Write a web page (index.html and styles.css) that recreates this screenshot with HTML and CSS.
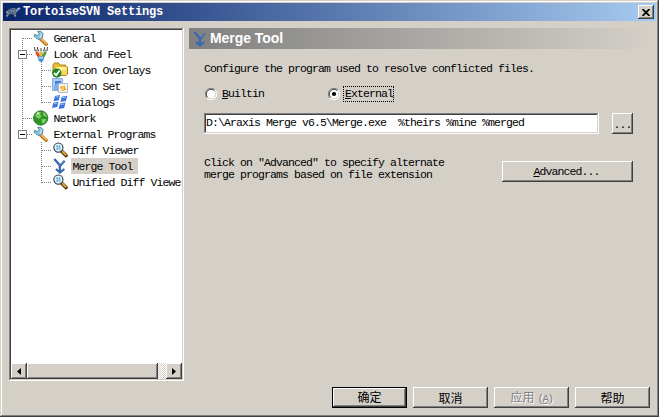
FILE: index.html
```html
<!DOCTYPE html>
<html lang="en">
<head>
<meta charset="utf-8">
<title>TortoiseSVN Settings</title>
<link rel="stylesheet" href="styles.css">
</head>
<body>
<svg class="sprite" width="0" height="0">
  <symbol id="wrench" viewBox="0 0 16 16">
    <path d="M7 8.5 13.2 14.2" stroke="#b87318" stroke-width="3.4" stroke-linecap="round"/>
    <path d="M7.4 8.1 13.4 13.4" stroke="#f0b45c" stroke-width="2" stroke-linecap="round"/>
    <path d="M4.6 1.5 7.8 1.2 10 3.5 9.6 7.2 7.5 9.5 4.4 8.9 1.4 6.6 1.5 4.4 4.6 5.5 6.3 3.8Z" fill="#8cc4d8" stroke="#447f9b" stroke-width=".9"/>
    <path d="M8 3.2 8.2 6.3 6.6 7.7" stroke="#d2edf5" fill="none"/>
  </symbol>
  <symbol id="look" viewBox="0 0 16 16">
    <path d="M2 4 4.5 11H11.5L14 4 11 7 8 4 5 7Z" fill="#d8d4cc"/>
    <path d="M3.4 6 6 10.5" stroke="#e84b20" stroke-width="2.8"/>
    <path d="M8 6V11" stroke="#f5b72d" stroke-width="2.6"/>
    <path d="M12.6 6 10 10.5" stroke="#49a43c" stroke-width="2.8"/>
    <path d="M1.5 1 2 4.5 4 5M4.5 1V3.5L6 5M8 2V5M11.5 1V3.5L10 5M14.5 1 14 4.5 12 5" stroke="#555" stroke-width="1.1" fill="none"/>
    <path d="M4.8 10.5H11.2L10.2 15 8 16 5.8 15Z" fill="#4388df"/>
    <path d="M6 12H10" stroke="#b9dcff" stroke-width="1.6"/>
  </symbol>
  <symbol id="overlay" viewBox="0 0 16 16">
    <path d="M1 12V2.5L2.5 1H6.5L8 3H13.5V5H15.5V12L14 13.5H2Z" fill="#e8bc35" stroke="#a57712" stroke-width=".9"/>
    <path d="M4 5H14.5V12.5H4Z" fill="#fff09a"/>
    <path d="M5 8H14V12H5Z" fill="#f7d85c"/>
    <circle cx="4.8" cy="11.1" r="4.6" fill="#168522"/>
    <path d="M2 11 4.2 13.2 7.6 8.5" stroke="#fff" stroke-width="1.8" fill="none"/>
  </symbol>
  <symbol id="iconset" viewBox="0 0 16 16">
    <path d="M.5 .5H10.5V12.5H.5Z" fill="#a9cbf4" stroke="#8aaada"/>
    <path d="M3 3H9V8H3Z" fill="#447fd6"/><path d="M2 8 5 5 8 9V12H2Z" fill="#7eabed"/>
    <path d="M6.5 5.5H15.5V14.5H6.5Z" fill="#f9f4e8" stroke="#b1b7c8"/>
    <path d="M9 8 10.8 8.6 13 7.4 13.2 9.8 14.4 11.5 12 12.6 10 13.2 9.6 11 8 10Z" fill="#f39c2d"/>
    <path d="M10 9H12V12H10Z" fill="#ffcf5d"/>
  </symbol>
  <symbol id="dialogs" viewBox="0 0 16 16">
    <path d="M3 2 8 1 6.8 6.3 1.5 7.2Z M9.7 2.7 15.3 1.7 14 7 8.5 8Z M1.3 8.7 6.5 7.8 5.2 13 0 14Z M8 9.5 13.5 8.5 12.2 14 6.7 15Z" fill="#3e72df"/>
    <path d="M3.5 3.2 6.7 2.5M10.2 3.8 14 3.1M2 9.8 5 9.3M8.6 10.6 12 10" stroke="#9dc0ff"/>
  </symbol>
  <symbol id="globe" viewBox="0 0 16 16">
    <circle cx="7.7" cy="8" r="7.2" fill="#2d9426" stroke="#17681a" stroke-width=".7"/>
    <path d="M2 5 5 1.7 8 2 7 4.5 9 6 6 9 3 7Z M10 2 13 4 14 7 11 6 9.5 4Z M8.5 9 13.5 9 11.5 13 9 13Z" fill="#7dcb61"/>
    <path d="M4 3.6 6.2 2.8" stroke="#e3ffd5" stroke-width="1.4"/>
  </symbol>
  <symbol id="magnifier" viewBox="0 0 16 16">
    <path d="M10 9.5 14 13.5" stroke="#51320b" stroke-width="3.6" stroke-linecap="round"/>
    <path d="M10.5 9.5 13.7 12.8" stroke="#e8a52c" stroke-width="1.9" stroke-linecap="round"/>
    <circle cx="6.4" cy="5.6" r="4.6" fill="#d9f0ff" stroke="#343b44" stroke-width="1.1"/>
    <path d="M4 4.5H8.5M4 6.8H8.5M5.2 3V8M7.6 3V8" stroke="#71a9d3" stroke-width=".8"/>
  </symbol>
  <symbol id="merge" viewBox="0 0 16 16">
    <path d="M2.3 .9 7.8 7.2 8 14M12.7 2.7 8.2 7.8" fill="none" stroke="#3868ae" stroke-width="2.3"/>
    <path d="M4 11 8 14.5 12.3 11" fill="none" stroke="#3868ae" stroke-width="2.2"/>
    <path d="M9 6.4 12.2 3" stroke="#78a2bf" stroke-width=".8"/>
  </symbol>
  <symbol id="radio-ring" viewBox="0 0 12 12">
    <circle cx="6" cy="6" r="5" fill="#fff"/>
    <path d="M1.9 10.1A5.6 5.6 0 0 1 10.1 1.9" fill="none" stroke="#808080"/>
    <path d="M10.1 1.9A5.6 5.6 0 0 1 1.9 10.1" fill="none" stroke="#fff"/>
    <path d="M2.7 9.3A4.6 4.6 0 0 1 9.3 2.7" fill="none" stroke="#404040"/>
    <path d="M9.3 2.7A4.6 4.6 0 0 1 2.7 9.3" fill="none" stroke="#d4d0c8"/>
  </symbol>
</svg>

<main class="window">
  <header class="titlebar">
    <svg class="tortoise" viewBox="0 0 16 16">
      <path d="M1 9 3 6 7 4H10L12 7 11 10H5L3 12H1L2 10ZM10 9 11.5 12H9.5L8 10Z" fill="#6e7786"/>
      <path d="M4 7 6 5 9 5 10.5 8 8 9 5 9Z" fill="#3e5d82"/>
      <path d="M11 7 12 4 15 3.5 15.5 5 13 6.5 12 8Z" fill="#81a8ce"/>
      <path d="M1 8H3M6 6 7 8M9 6 8 8M1 12H3M9 12H11" stroke="#b1bac5" stroke-width=".9"/>
    </svg>
    <h1 class="caption">TortoiseSVN Settings</h1>
    <button class="raised close" aria-label="Close"><svg width="8" height="7" viewBox="0 0 8 7"><path d="M.5 0 7.5 7M7.5 0 .5 7" stroke="#000" stroke-width="1.7"/></svg></button>
  </header>

  <div class="content">
    <nav class="tree sunken">
      <ul class="nodes">
        <li class="node"><svg class="gutter"><path class="dots" d="M11.5 8V16M12 8.5H22"/></svg><svg class="icon"><use href="#wrench"/></svg><span class="label">General</span></li>
        <li class="node"><svg class="gutter"><path class="dots" d="M11.5 0V16M16 8.5H22"/><path class="expander" d="M7.5 4.5H15.5V12.5H7.5Z"/><path class="minus" d="M9 8.5H14"/></svg><svg class="icon"><use href="#look"/></svg><span class="label">Look and Feel</span></li>
        <li class="node child"><svg class="gutter"><path class="dots" d="M11.5 0V16M30.5 0V16M31 8.5H41"/></svg><svg class="icon"><use href="#overlay"/></svg><span class="label">Icon Overlays</span></li>
        <li class="node child"><svg class="gutter"><path class="dots" d="M11.5 0V16M30.5 0V16M31 8.5H41"/></svg><svg class="icon"><use href="#iconset"/></svg><span class="label">Icon Set</span></li>
        <li class="node child"><svg class="gutter"><path class="dots" d="M11.5 0V16M30.5 0V9M31 8.5H41"/></svg><svg class="icon"><use href="#dialogs"/></svg><span class="label">Dialogs</span></li>
        <li class="node"><svg class="gutter"><path class="dots" d="M11.5 0V16M12 8.5H22"/></svg><svg class="icon"><use href="#globe"/></svg><span class="label">Network</span></li>
        <li class="node"><svg class="gutter"><path class="dots" d="M11.5 0V4M16 8.5H22"/><path class="expander" d="M7.5 4.5H15.5V12.5H7.5Z"/><path class="minus" d="M9 8.5H14"/></svg><svg class="icon"><use href="#wrench"/></svg><span class="label">External Programs</span></li>
        <li class="node child"><svg class="gutter"><path class="dots" d="M30.5 0V16M31 8.5H41"/></svg><svg class="icon"><use href="#magnifier"/></svg><span class="label">Diff Viewer</span></li>
        <li class="node child"><svg class="gutter"><path class="dots" d="M30.5 0V16M31 8.5H41"/></svg><svg class="icon"><use href="#merge"/></svg><span class="label selected">Merge Tool</span></li>
        <li class="node child"><svg class="gutter"><path class="dots" d="M30.5 0V9M31 8.5H41"/></svg><svg class="icon"><use href="#magnifier"/></svg><span class="label">Unified Diff Viewer</span></li>
      </ul>
      <div class="scrollbar">
        <span class="raised arrow"><svg width="4" height="7" viewBox="0 0 4 7"><path d="M4 0V7L0 3.5Z"/></svg></span>
        <span class="raised thumb"></span>
        <span class="track"></span>
        <span class="raised arrow"><svg width="4" height="7" viewBox="0 0 4 7"><path d="M0 0V7L4 3.5Z"/></svg></span>
      </div>
    </nav>

    <section class="page">
      <div class="page-head"><svg class="icon"><use href="#merge"/></svg><h2 class="page-title">Merge Tool</h2></div>
      <div class="form">
        <p class="intro">Configure the program used to resolve conflicted files.</p>
        <div class="choices">
          <div class="choice"><svg class="radio" viewBox="0 0 12 12"><use href="#radio-ring"/></svg><span class="choice-text"><u>B</u>uiltin</span></div>
          <div class="choice"><svg class="radio" viewBox="0 0 12 12"><use href="#radio-ring"/><circle cx="6" cy="6" r="2.1"/></svg><span class="choice-text focused"><u>E</u>xternal</span></div>
        </div>
        <div class="command">
          <div class="field sunken">D:\Araxis Merge v6.5\Merge.exe&nbsp; %theirs %mine %merged</div>
          <button class="raised browse">...</button>
        </div>
        <div class="extra">
          <p class="hint">Click on "Advanced" to specify alternate<br>merge programs based on file extension</p>
          <button class="raised advanced"><span><u>A</u>dvanced...</span></button>
        </div>
      </div>
    </section>
  </div>

  <footer class="actions">
    <button class="action default"><span class="raised face">确定</span></button>
    <button class="action raised">取消</button>
    <button class="action raised disabled"><span>应用<span class="key">(<u>A</u>)</span></span></button>
    <button class="action raised">帮助</button>
  </footer>
</main>
</body>
</html>
```
FILE: styles.css
```css
* { box-sizing: border-box; }
body, h1, h2, p, ul { margin: 0; padding: 0; }
body {
  width: 659px;
  height: 417px;
  overflow: hidden;
  font: 11.5px/12px "Liberation Mono", "Noto Sans CJK SC", monospace;
  letter-spacing: -0.9px;
  color: #000;
}
.sprite { position: absolute; }
button { font: inherit; letter-spacing: inherit; color: inherit; padding: 0; border: 0; }
u { text-underline-offset: 1px; text-decoration-skip-ink: none; }

.window {
  display: flex;
  flex-direction: column;
  width: 659px;
  height: 417px;
  padding: 3px;
  background: #d4d0c8;
  box-shadow: inset -1px -1px #404040, inset 1px 1px #d4d0c8, inset -2px -2px #808080, inset 2px 2px #fff;
}
.raised {
  background: #d4d0c8;
  box-shadow: inset -1px -1px #404040, inset 1px 1px #fff, inset -2px -2px #808080;
}
.sunken {
  background: #fff;
  box-shadow: inset -1px -1px #fff, inset 1px 1px #808080, inset -2px -2px #d4d0c8, inset 2px 2px #404040;
}

.titlebar {
  display: flex;
  align-items: center;
  flex: none;
  height: 18px;
  padding: 0 2px;
  background: linear-gradient(90deg, #0a246a, #a6caf0);
}
.tortoise { width: 16px; height: 16px; }
.caption {
  flex: 1;
  margin-left: 2px;
  font-size: 12px;
  line-height: 18px;
  letter-spacing: -0.2px;
  color: #fff;
}
.close { display: flex; align-items: center; justify-content: center; width: 16px; height: 14px; }

.content { display: flex; gap: 5px; height: 353px; margin: 7px 4px 0 6px; }
.tree { display: flex; flex-direction: column; width: 175px; padding: 2px; }
.nodes { flex: 1; overflow: hidden; list-style: none; }
.node { display: flex; height: 16px; white-space: nowrap; }
.gutter { flex: none; width: 22px; height: 16px; shape-rendering: crispEdges; }
.child .gutter { width: 41px; }
.dots { stroke: #808080; stroke-dasharray: 1 1; fill: none; }
.expander { stroke: #808080; fill: #fff; }
.minus { stroke: #000; }
.icon { flex: none; width: 16px; height: 16px; }
.label { margin-left: 3px; padding: 0 4px 0 1.5px; line-height: 17px; }
.selected { width: 67px; background: #d4d0c8; }

.scrollbar { display: flex; height: 16px; }
.arrow { display: flex; align-items: center; justify-content: center; width: 16px; }
.thumb { width: 131px; }
.track { width: 8px; background: repeating-conic-gradient(#d4d0c8 0 25%, #fff 0 50%) 0 0 / 2px 2px; }

.page { flex: 1; }
.page-head {
  display: flex;
  align-items: center;
  height: 21px;
  padding-left: 3px;
  background: linear-gradient(90deg, #808080, #d4d0c8);
}
.page-title {
  margin-left: 2px;
  font: bold 14px/21px "Liberation Sans", sans-serif;
  letter-spacing: -0.05px;
  color: #fff;
}
.form { padding: 14px 19px 0 15px; }
.intro { height: 12px; }
.choices { display: flex; margin-top: 11px; height: 16px; }
.choice { display: flex; align-items: center; width: 123px; padding-left: 1px; }
.radio { width: 12px; height: 12px; }
.choice-text { margin-left: 3px; padding: 0 1px; line-height: 14px; border: 1px dotted transparent; height: 16px; }
.choice-text.focused { width: 51px; border-color: #000; }
.command { display: flex; justify-content: space-between; margin-top: 11px; }
.field { width: 395px; height: 21px; padding-left: 2px; line-height: 20px; white-space: nowrap; }
.browse { width: 21px; height: 21px; line-height: 24px; }
.extra { display: flex; justify-content: space-between; margin-top: 23px; }
.hint { white-space: nowrap; }
.advanced { width: 131px; height: 21px; margin-top: 4px; padding-right: 2px; }

.actions { display: flex; justify-content: flex-end; gap: 6px; margin: 6px 6px 0 0; }
.action {
  width: 75px;
  height: 21px;
  font: 12px/20px "Noto Sans CJK SC", sans-serif;
  letter-spacing: 0;
}
.default { padding: 1px; background: #000; }
.face { display: block; height: 19px; line-height: 18px; }
.disabled { color: #808080; text-shadow: 1px 1px #fff; }
.key { margin-left: 3px; font-family: "Liberation Mono", monospace; font-size: 11px; letter-spacing: -1.6px; }
```
